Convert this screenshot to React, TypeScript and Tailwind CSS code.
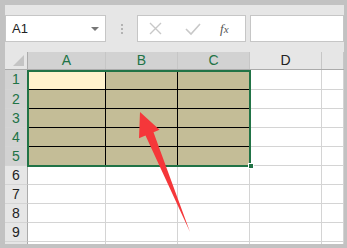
import React from "react";

const cols = [
  { name: "A", w: 78, sel: true },
  { name: "B", w: 72, sel: true },
  { name: "C", w: 72, sel: true },
  { name: "D", w: 72, sel: false },
  { name: "", w: 22, sel: false },
];

const rows = [
  { n: 1, h: 20 },
  { n: 2, h: 19 },
  { n: 3, h: 19 },
  { n: 4, h: 19 },
  { n: 5, h: 19 },
  { n: 6, h: 19 },
  { n: 7, h: 19 },
  { n: 8, h: 19 },
  { n: 9, h: 19 },
  { n: 10, h: 19 },
];

function cellClass(r: number, c: number) {
  const inSel = r <= 5 && c < 3;
  if (!inSel) return "border-r border-b border-[#d4d4d4] bg-white";
  if (r === 1 && c === 0) return "border-r border-b border-black bg-[#fff2cc]";
  return "border-r border-b border-black bg-[#c4bd97]";
}

export default function App() {
  return (
    <div
      className="relative w-[347px] h-[248px] overflow-hidden bg-[#c2c2c2] pt-[5px] pl-[5px] pr-[3px] pb-[4px]"
      style={{ fontFamily: '"Liberation Sans", "Noto Sans", sans-serif' }}
    >
      <div className="flex flex-col h-full bg-[#e6e6e6]">
        {/* toolbar */}
        <div className="h-[47px] flex items-start pt-[10px] shrink-0">
          <div className="w-[101px] h-[27px] bg-white border border-[#c6c6c6] flex items-center justify-between pl-[6px] pr-[6px]">
            <span className="text-[13px] text-[#222]">A1</span>
            <span className="w-0 h-0 border-l-[4px] border-r-[4px] border-t-[4px] border-l-transparent border-r-transparent border-t-[#777]" />
          </div>
          <div className="w-[31px] h-[27px] flex flex-col items-center justify-center gap-[2px]">
            <span className="w-[2px] h-[2px] bg-[#b3b3b3]" />
            <span className="w-[2px] h-[2px] bg-[#b3b3b3]" />
            <span className="w-[2px] h-[2px] bg-[#b3b3b3]" />
          </div>
          <div className="w-[109px] h-[27px] bg-white border border-[#c6c6c6] flex items-center">
            <svg width="38" height="25" viewBox="0 0 38 25">
              <path d="M12 7 L23 18 M23 7 L12 18" stroke="#c8c8c8" strokeWidth="1.4" />
            </svg>
            <svg width="38" height="25" viewBox="0 0 38 25">
              <path d="M10 13 L15 18 L24 8" stroke="#c8c8c8" strokeWidth="1.6" fill="none" />
            </svg>
            <span
              className="text-[13px] italic text-[#555] ml-[6px]"
              style={{ fontFamily: '"Liberation Serif", serif' }}
            >
              f<span className="text-[11px]">x</span>
            </span>
          </div>
          <div className="ml-[4px] flex-1 h-[27px] bg-white border border-[#c6c6c6]" />
        </div>

        {/* sheet */}
        <div className="relative flex-1 overflow-hidden bg-white">
          {/* column headers */}
          <div className="flex h-[18px] border-b border-[#ababab]">
            <div className="w-[23px] h-full bg-[#e6e6e6] border-r border-[#ababab] relative">
              <span className="absolute right-[3px] bottom-[3px] w-0 h-0 border-l-[11px] border-b-[11px] border-l-transparent border-b-[#c4c4c4]" />
            </div>
            {cols.map((c, i) => (
              <div
                key={i}
                style={{ width: c.w }}
                className={`h-full flex items-center justify-center text-[14px] border-r border-[#c6c6c6] ${
                  c.sel ? "bg-[#d2d2d2] text-[#217346]" : "bg-[#e6e6e6] text-[#222]"
                }`}
              >
                {c.name}
              </div>
            ))}
          </div>

          {/* rows */}
          {rows.map((r) => (
            <div key={r.n} className="flex" style={{ height: r.h }}>
              <div
                className={`w-[23px] h-full flex items-center justify-center text-[14px] border-r border-[#ababab] border-b border-b-[#d4d4d4] ${
                  r.n <= 5 ? "bg-[#d2d2d2] text-[#217346]" : "bg-[#e6e6e6] text-[#222]"
                }`}
              >
                {r.n <= 9 ? r.n : ""}
              </div>
              {cols.map((c, i) => (
                <div key={i} style={{ width: c.w }} className={`h-full ${cellClass(r.n, i)}`} />
              ))}
            </div>
          ))}

          {/* selection */}
          <div className="absolute left-[22px] top-[18px] w-[224px] h-[97px] border-2 border-[#217346]" />
          <div className="absolute left-[243px] top-[111px] w-[6px] h-[6px] bg-[#217346] border border-white" />
        </div>
      </div>

      {/* arrow */}
      <svg className="absolute left-0 top-0" width="347" height="248" viewBox="0 0 347 248">
        <polygon
          points="140,112 159.5,129.7 153.5,132.2 190,232 145.5,135.6 139,138.3"
          fill="#f5373a"
        />
      </svg>
    </div>
  );
}
